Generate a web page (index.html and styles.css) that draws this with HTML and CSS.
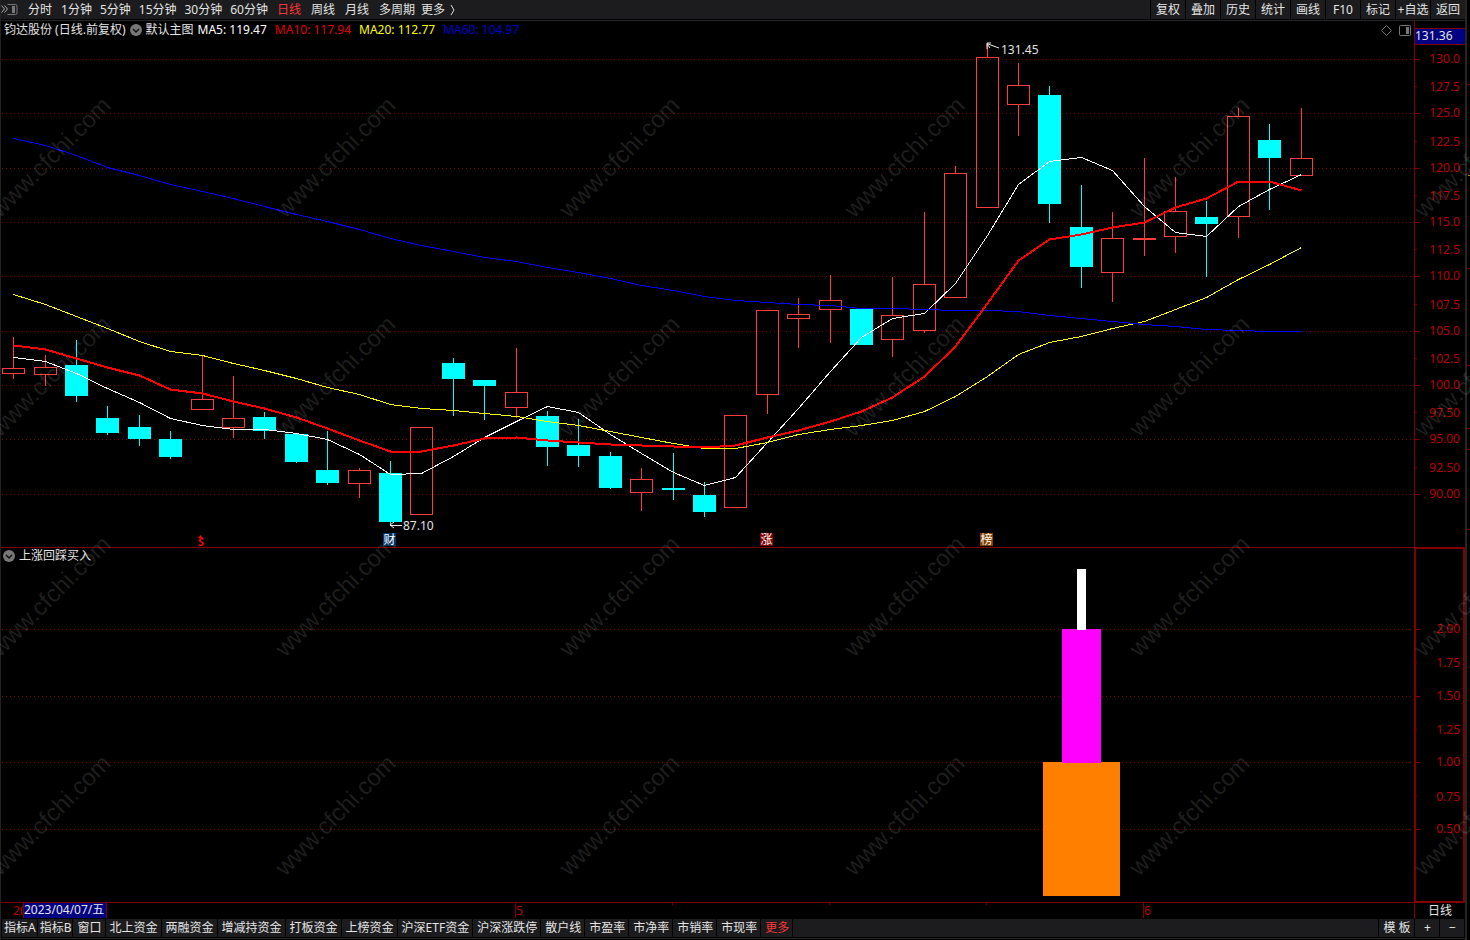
FILE: index.html
```html
<!DOCTYPE html>
<html lang="zh-CN">
<head>
<meta charset="utf-8">
<meta name="viewport" content="width=device-width, initial-scale=1">
<title>钧达股份 日线</title>
<link rel="stylesheet" href="styles.css">
</head>
<body>
<div class="main">
  <header class="toolbar">
    <button class="panel-toggle" type="button" aria-label="展开侧栏">
      <svg width="17" height="19" viewBox="0 0 17 19" fill="none" stroke="#777">
        <path d="M0.5 5.5l3 3.5-3 3.5M3.5 5.5l3 3.5-3 3.5" stroke="#aaa"/>
        <path d="M6.5 4.5h8a1.5 1.5 0 0 1 1.500 1.500v7a1.500 1.500 0 0 1-1.500 1.500h-8"/>
        <rect x="11" y="6" width="3" height="7" fill="#777" stroke="none"/>
      </svg>
    </button>
    <nav class="periods">
      <div class="period-group">
        <button type="button">分时</button>
        <button type="button">1分钟</button>
        <button type="button">5分钟</button>
        <button type="button">15分钟</button>
        <button type="button">30分钟</button>
        <button type="button">60分钟</button>
      </div>
      <div class="period-group period-group-wide">
        <button type="button" class="active">日线</button>
        <button type="button">周线</button>
        <button type="button">月线</button>
        <button type="button">多周期</button>
      </div>
      <button type="button" class="more">更多
        <svg width="6" height="12" viewBox="0 0 6 12" fill="none" stroke="#ddd"><path d="M1 1l3 5-3 5"/></svg>
      </button>
    </nav>
    <div class="actions">
      <button type="button">复权</button>
      <button type="button">叠加</button>
      <button type="button">历史</button>
      <button type="button">统计</button>
      <button type="button">画线</button>
      <button type="button">F10</button>
      <button type="button">标记</button>
      <button type="button">+自选</button>
      <button type="button">返回</button>
    </div>
  </header>

  <main class="workspace">
    <section class="pane price-pane">
      <svg class="plot" id="price-plot"></svg>
      <div class="legend">
        <span>钧达股份 (日线.前复权)</span>
        <button class="round" type="button" aria-label="主图指标">
          <svg width="12" height="12" viewBox="0 0 12 12"><circle cx="6" cy="6" r="6" fill="#777"/><path d="M3 5l3 3 3-3" fill="none" stroke="#111" stroke-width="1.500"/></svg>
        </button>
        <span>默认主图</span>
        <span class="averages">
          <span class="ma5">MA5: 119.47</span>
          <span class="ma10">MA10: 117.94</span>
          <span class="ma20">MA20: 112.77</span>
          <span class="ma60">MA60: 104.97</span>
        </span>
      </div>
      <div class="pane-tools">
        <svg width="11" height="11" viewBox="0 0 11 11" fill="none" stroke="#777"><path d="M5.500 0.500l5 5-5 5-5-5z"/></svg>
        <svg width="12" height="11" viewBox="0 0 12 11" fill="none" stroke="#777"><rect x="0.500" y="0.500" width="11" height="10" rx="1"/><rect x="7" y="2" width="3" height="7" fill="#777" stroke="none"/></svg>
      </div>
    </section>
    <section class="axis price-axis">
      <svg class="plot" id="price-axis"></svg>
      <div class="cursor-price">131.36</div>
    </section>

    <section class="pane study-pane">
      <svg class="plot" id="study-plot"></svg>
      <div class="legend">
        <button class="round" type="button" aria-label="副图指标">
          <svg width="12" height="12" viewBox="0 0 12 12"><circle cx="6" cy="6" r="6" fill="#777"/><path d="M3 5l3 3 3-3" fill="none" stroke="#111" stroke-width="1.500"/></svg>
        </button>
        <span>上涨回踩买入</span>
      </div>
    </section>
    <section class="axis study-axis"><svg class="plot" id="study-axis"></svg></section>

    <section class="dates">
      <svg class="plot" id="date-axis"></svg>
      <div class="cursor-date">2023/04/07/五</div>
    </section>
    <div class="axis period-name">日线</div>
  </main>

  <footer class="tabs">
    <button type="button" class="tight">指标A</button>
    <button type="button" class="tight">指标B</button>
    <button type="button">窗口</button>
    <button type="button">北上资金</button>
    <button type="button">两融资金</button>
    <button type="button">增减持资金</button>
    <button type="button">打板资金</button>
    <button type="button">上榜资金</button>
    <button type="button">沪深ETF资金</button>
    <button type="button">沪深涨跌停</button>
    <button type="button">散户线</button>
    <button type="button">市盈率</button>
    <button type="button">市净率</button>
    <button type="button">市销率</button>
    <button type="button">市现率</button>
    <button type="button" class="active">更多</button>
    <span class="filler"></span>
    <button type="button" class="template">模 板</button>
    <button type="button" class="zoom-button">+</button>
    <button type="button" class="zoom-button">−</button>
  </footer>
</div>
<aside class="rail"><svg class="plot" id="rail"></svg></aside>
<svg class="watermark" id="watermark" aria-hidden="true"></svg>
<script src="chart.js"></script>
</body>
</html>
```
FILE: styles.css
```css
* { box-sizing: border-box; }

body {
  margin: 0;
  min-height: 100vh;
  display: flex;
  position: relative;
  overflow: hidden;
  background: #000;
  color: #e4e4e4;
  font: 12px/18px "Noto Sans", "Noto Sans CJK SC", sans-serif;
}

button {
  margin: 0;
  padding: 0;
  border: 0;
  background: none;
  color: inherit;
  font: inherit;
  white-space: nowrap;
  cursor: pointer;
}

svg { display: block; }

.main {
  flex: 1;
  min-width: 0;
  display: flex;
  flex-direction: column;
  border-left: 1px solid #222;
}

.rail {
  position: relative;
  width: 5px;
  border-left: 2px solid #262626;
}

.toolbar {
  display: flex;
  height: 21px;
  background: #1c1c1e;
  border-bottom: 1px solid #262628;
  box-shadow: inset 0 -1px #000;
}

.toolbar button { height: 19px; }
.panel-toggle { width: 27px; }

.periods {
  flex: 1;
  display: flex;
  gap: 9px;
}

.period-group { display: flex; gap: 8px; }
.period-group button:first-child { padding-right: 1px; }
.period-group-wide { gap: 10px; }
.period-group-wide button:first-child { padding: 0; }
.more { display: flex; align-items: center; gap: 5px; margin-left: -3px; }
.active { color: #ff3434; }

.actions { display: flex; }

.actions button {
  width: 35px;
  border-left: 1px solid #000;
}

.workspace {
  flex: 1;
  display: grid;
  grid-template-columns: minmax(0, 1fr) 51px;
  grid-template-rows: minmax(0, 527fr) minmax(0, 355fr) 16px;
}

.pane, .axis, .dates { position: relative; min-width: 0; min-height: 0; }

.plot {
  position: absolute;
  inset: 0;
  width: 100%;
  height: 100%;
}

.pane { border-bottom: 1px solid #800000; }
.axis { border-left: 1px solid #800000; }
.study-axis { border: 2px solid #800000; margin-top: -1px; }

.legend {
  position: absolute;
  top: 0;
  left: 3px;
  display: flex;
  align-items: center;
  gap: 4px;
}

.study-pane .legend { left: 2px; top: -1px; }
.averages { display: flex; gap: 8px; }

.ma5 { color: #fff; }
.ma10 { color: #e00000; }
.ma20 { color: #ff0; }
.ma60 { color: #0000d0; }

.pane-tools {
  position: absolute;
  top: 4px;
  right: 3px;
  display: flex;
  gap: 7px;
}

.cursor-price {
  position: absolute;
  top: 7px;
  left: 0;
  right: 0;
  height: 17px;
  border: solid #800000;
  border-width: 1px 0;
  background: #000080;
  line-height: 14px;
}

.cursor-date {
  position: absolute;
  top: 0;
  left: 22px;
  height: 15px;
  border: solid #800000;
  border-width: 0 1px;
  padding-right: 2px;
  background: #000080;
  line-height: 14px;
}

.period-name { text-align: center; line-height: 15px; }

.tabs {
  display: flex;
  gap: 1px;
  height: 20px;
  padding: 0 1px 1px;
  margin-bottom: 1px;
  border-bottom: 1px solid #262628;
}

.tabs button, .filler {
  height: 18px;
  background: #1c1c1e;
}

.tabs button { padding: 0 3px 0 4px; }
.tabs .tight { padding: 0 1px 0 2px; }
.filler { flex: 1; }
.tabs .template { width: 35px; }
.tabs .zoom-button { width: 24px; }

.watermark {
  position: absolute;
  inset: 0;
  width: 100%;
  height: 100%;
  pointer-events: none;
}

.watermark text {
  font: 24px "Liberation Sans", sans-serif;
  fill: #fff;
  fill-opacity: 0.12;
}

.grid { stroke: #800000; stroke-dasharray: 1 3; }
.tick { fill: #800000; }
.tick-yellow { fill: #a08000; }
.scale { fill: #b80000; }
.note { fill: #e4e4e4; }
.flag { fill: #fff; }
.up-fill { fill: #ff3c3c; }
.up-body { fill: none; stroke: #ff3c3c; }
.down { fill: #0ff; }
.line { fill: none; stroke-width: 1; }
.line.bold { stroke-width: 2; }
.end { text-anchor: end; }
.middle { text-anchor: middle; }
```
FILE: chart.js
```js
const NS = 'http://www.w3.org/2000/svg';

// kind (u = rise, d = fall), high, body top, body bottom, low
const candles = [
  ['u',337,368,374,379],['u',355,367,375,386],['d',340,365,396,402],['d',406,418,433,435],
  ['d',415,427,439,446],['d',431,439,457,459],['u',355,399,410,410],['u',376,418,428,438],
  ['d',412,417,431,439],['d',434,434,462,463],['d',431,470,483,485],['u',468,470,484,498],
  ['d',461,473,522,525],['u',427,427,515,515],['d',358,363,379,416],['d',380,380,386,420],
  ['u',348,392,408,418],['d',411,416,447,466],['d',419,445,456,467],['d',452,456,488,489],
  ['u',468,479,493,511],['d',453,488,490,500],['d',482,495,512,517],['u',415,415,508,508],
  ['u',310,310,395,414],['u',298,314,319,348],['u',275,300,310,343],['d',309,309,345,345],
  ['u',277,315,340,357],['u',212,284,331,333],['u',166,173,298,298],['u',43,57,208,208],
  ['u',63,85,105,136],['d',86,95,204,223],['d',185,227,267,288],['u',212,238,273,302],
  ['u',158,238,240,256],['u',177,211,237,253],['d',201,217,224,277],['u',108,116,217,238],
  ['d',124,140,158,210],['u',108,158,176,176]
];

const averages = [
  { color: '#fff', y: [357,361,373,388,402,418,425,429,429,433,439,454,474,473,456,437,421,406,412,434,453,472,485,477,442,408,371,337,318,313,283,235,184,161,157,170,206,232,236,206,189,174] },
  { color: '#ff0', y: [294,304,316,328,341,351,355,363,370,378,387,394,404,408,410,413,416,421,425,431,437,443,448,448,442,434,429,425,420,411,396,376,354,342,336,328,321,309,297,279,264,247] },
  { color: '#00f', y: [138,145,155,167,175,184,191,198,206,214,221,229,238,245,251,257,261,267,272,278,285,290,296,300,302,304,305,308,308,309,310,310,311,315,318,321,324,326,329,330,331,331] },
  { color: '#f00', bold: true, y: [345,349,358,367,375,389,393,401,408,417,428,440,451,451,445,438,437,440,442,444,445,446,447,445,437,430,421,411,397,376,346,303,260,239,234,227,222,207,198,181,181,190] }
];

function clear(id) {
  const svg = document.getElementById(id);
  svg.replaceChildren();
  return svg;
}

function add(svg, tag, attrs, text) {
  const node = document.createElementNS(NS, tag);
  for (const key in attrs) node.setAttribute(key, attrs[key]);
  if (text !== undefined) node.textContent = text;
  svg.append(node);
  return node;
}

function box(svg, cls, x, y, width, height) {
  add(svg, 'rect', { class: cls, x, y, width: Math.max(width, 1), height: Math.max(height, 1) });
}

function gridLine(svg, y, width) {
  add(svg, 'path', { class: 'grid', d: `M1 ${y + 0.5}H${width - 1}` });
}

function drawPrice() {
  const svg = clear('price-plot');
  const w = svg.clientWidth;
  const h = svg.clientHeight;
  const X = v => Math.round((v - 1) * w / 1413);
  const Y = v => Math.round((v - 21) * h / 526);
  const center = i => X(Math.floor(13.6 + i * 31.405));
  const half = Math.round(11 * w / 1413);

  for (let p = 130; p >= 90; p -= 5) gridLine(svg, Y(Math.round(59 + (130 - p) * 10.87)), w);

  candles.forEach(([kind, high, top, bottom, low], i) => {
    const x = center(i);
    const fill = kind === 'u' ? 'up-fill' : 'down';
    if (kind === 'd' || bottom - top < 4) {
      box(svg, fill, x - half, Y(top), half * 2 + 1, Y(bottom) - Y(top));
      box(svg, fill, x, Y(high), 1, Y(low) - Y(high));
    } else {
      if (high < top) box(svg, fill, x, Y(high), 1, Y(top) - Y(high));
      if (low > bottom) box(svg, fill, x, Y(bottom), 1, Y(low) - Y(bottom));
      add(svg, 'rect', { class: 'up-body', x: x - half + 0.5, y: Y(top) + 0.5, width: half * 2, height: Y(bottom) - Y(top) - 1 });
    }
  });

  averages.forEach(({ color, bold, y }) => {
    const points = y.map((v, i) => `${center(i) + 0.5},${Y(v) + 0.5}`).join(' ');
    add(svg, 'polyline', { class: bold ? 'line bold' : 'line', stroke: color, points, 'shape-rendering': 'crispEdges' });
  });

  const hx = center(31);
  add(svg, 'path', { class: 'line', stroke: '#eee', d: `M${hx + 1} ${Y(44)}l11 4M${hx + 4} ${Y(43)}h-4v6M${hx} ${Y(44)}l3 4` });
  add(svg, 'text', { class: 'note', x: X(1001), y: Y(54) }, '131.45');
  const lx = center(12);
  add(svg, 'path', { class: 'line', stroke: '#eee', d: `M${lx} ${Y(525) + 0.5}h12M${lx + 4} ${Y(522)}l-4 3 4 3` });
  add(svg, 'text', { class: 'note', x: X(403), y: Y(530) }, '87.10');

  [[389, '#003468', '财'], [766, '#800000', '涨'], [986, '#804000', '榜']].forEach(([x, fill, label]) => {
    add(svg, 'rect', { x: X(x) - 6, y: Y(533), width: 13, height: 13, fill });
    add(svg, 'text', { class: 'flag middle', x: X(x) + 0.5, y: Y(544) }, label);
  });
  add(svg, 'path', { fill: '#f00', d: `M${X(198)} ${Y(538)}l2.500-3 2.500 3z` });
  add(svg, 'text', { class: 'middle', fill: '#f00', x: X(201), y: Y(546), 'font-size': 10, 'font-weight': 700 }, 'S');

  const axis = clear('price-axis');
  for (let p = 130; p >= 90; p -= 2.5) {
    const minor = p % 5 !== 0;
    const y = Y(Math.round(59 + (130 - p) * 10.87));
    box(axis, 'tick', 0, y, minor ? 2 : 5, 1);
    add(axis, 'text', { class: 'scale end', x: 45, y: y + (minor ? 5 : 4) }, p < 100 ? p.toFixed(2) : p.toFixed(1));
  }
}

function drawStudy() {
  const svg = clear('study-plot');
  const w = svg.clientWidth;
  const h = svg.clientHeight;
  const X = v => Math.round((v - 1) * w / 1413);
  const Y = v => Math.round((v - 548) * h / 354);
  const level = v => Y(Math.round(629 + (2 - v) * 133.4));

  for (let v = 2; v > 0; v -= 0.5) gridLine(svg, level(v), w);
  [['#ff8000', 1043, 762, 1120, 896], ['#f0f', 1062, 629, 1101, 763], ['#fff', 1077, 569, 1086, 630]].forEach(([fill, l, t, r, b]) => {
    add(svg, 'rect', { fill, x: X(l), y: Y(t), width: X(r) - X(l), height: Y(b) - Y(t) });
  });

  const axis = clear('study-axis');
  for (let v = 2; v > 0.25; v -= 0.25) {
    const minor = (v * 2) % 1 !== 0;
    const y = level(v) - 1;
    box(axis, 'tick', 0, y, minor ? 1 : 4, 1);
    add(axis, 'text', { class: 'scale end', x: 44, y: y + (minor ? 5 : 4) }, v.toFixed(2));
  }
}

function drawDates() {
  const svg = clear('date-axis');
  const X = v => Math.round((v - 1) * svg.clientWidth / 1413);
  add(svg, 'text', { class: 'scale', x: X(13), y: 12 }, '2023');
  [[515, '5'], [1143, '6']].forEach(([x, label]) => {
    box(svg, 'tick', X(x), 0, 1, 15);
    add(svg, 'text', { class: 'scale', x: X(x) + 1, y: 12 }, label);
  });
  [672, 829, 986].forEach(x => box(svg, 'tick', X(x), 0, 1, 2));
}

function drawRail() {
  const svg = clear('rail');
  const Y = v => Math.round(v * svg.clientHeight / 940);
  [84, 268, 365, 428, 449, 529].forEach(y => box(svg, 'tick', 0, Y(y), 3, 1));
  box(svg, 'tick-yellow', 1, Y(175), 2, 1);
}

function drawWatermark() {
  const svg = clear('watermark');
  for (let y = 219; y < svg.clientHeight; y += 219.3) {
    for (let x = 0; x < svg.clientWidth; x += 284.7) {
      add(svg, 'text', { transform: `translate(${Math.round(x)} ${Math.round(y)}) rotate(-45)` }, 'www.cfchi.com');
    }
  }
}

function draw() {
  drawPrice();
  drawStudy();
  drawDates();
  drawRail();
  drawWatermark();
}

window.addEventListener('resize', draw);
draw();
```
